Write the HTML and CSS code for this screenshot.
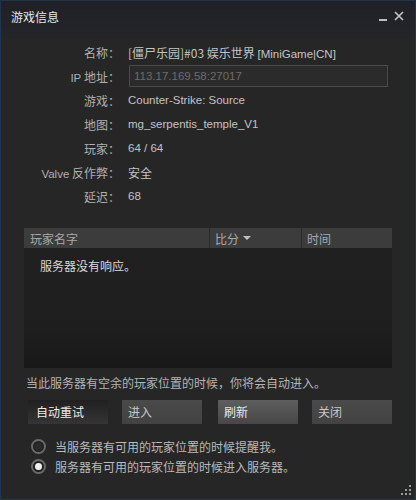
FILE: index.html
```html
<!DOCTYPE html>
<html>
<head>
<meta charset="utf-8">
<link rel="stylesheet" href="styles.css">
</head>
<body>
<div class="window">
  <div class="titlebar">
    <span class="title">游戏信息</span>
    <div class="controls">
      <span class="min"></span>
      <svg class="close" width="10" height="10" viewBox="0 0 10 10"><path d="M1 1L9 9M9 1L1 9" stroke="#c8c8c8" stroke-width="1.6"/></svg>
    </div>
  </div>
  <div class="info">
    <div class="lbl">名称：</div><div class="val">[僵尸乐园]#03 娱乐世界 <span class="lat">[MiniGame|CN]</span></div>
    <div class="lbl"><span class="lat">IP</span> 地址：</div><div class="val"><div class="ipbox">113.17.169.58:27017</div></div>
    <div class="lbl">游戏：</div><div class="val lat">Counter-Strike: Source</div>
    <div class="lbl">地图：</div><div class="val lat">mg_serpentis_temple_V1</div>
    <div class="lbl">玩家：</div><div class="val lat">64 / 64</div>
    <div class="lbl"><span class="lat">Valve</span> 反作弊：</div><div class="val">安全</div>
    <div class="lbl">延迟：</div><div class="val lat">68</div>
  </div>
  <div class="table">
    <div class="thead">
      <div class="th c1">玩家名字</div>
      <div class="th c2">比分 <span class="tri"></span></div>
      <div class="th c3">时间</div>
    </div>
    <div class="tbody">
      <div class="empty">服务器没有响应。</div>
    </div>
  </div>
  <div class="note">当此服务器有空余的玩家位置的时候，你将会自动进入。</div>
  <div class="buttons">
    <div class="btn dark">自动重试</div>
    <div class="btn">进入</div>
    <div class="btn hover">刷新</div>
    <div class="btn">关闭</div>
  </div>
  <div class="radios">
    <div class="radio"><span class="circle"></span>当服务器有可用的玩家位置的时候提醒我。</div>
    <div class="radio"><span class="circle on"></span>服务器有可用的玩家位置的时候进入服务器。</div>
  </div>
  <svg class="grip" width="10" height="10" viewBox="0 0 10 10">
    <rect x="8" y="0" width="2" height="2" fill="#9a9a9a"/>
    <rect x="4" y="4" width="2" height="2" fill="#9a9a9a"/>
    <rect x="8" y="4" width="2" height="2" fill="#9a9a9a"/>
    <rect x="0" y="8" width="2" height="2" fill="#9a9a9a"/>
    <rect x="4" y="8" width="2" height="2" fill="#9a9a9a"/>
    <rect x="8" y="8" width="2" height="2" fill="#9a9a9a"/>
  </svg>
</div>
</body>
</html>
```

FILE: styles.css
```css
* { box-sizing: border-box; }
html, body { margin: 0; padding: 0; background: #262626; }
body {
  font-family: "Noto Sans CJK SC", "Noto Sans", sans-serif;
  font-size: 12px;
  color: #b4b4b4;
}
.lat { font-family: "Liberation Sans", "Noto Sans CJK SC", sans-serif; font-size: 11.5px; }
.window {
  position: relative;
  width: 416px;
  height: 500px;
  border: 1px solid #1d3550;
  background: linear-gradient(#1f2127 0px, #22242a 28px, #262626 40px, #262626 100%);
  overflow: hidden;
}
.titlebar {
  height: 34px;
  display: flex;
  align-items: flex-start;
  justify-content: space-between;
  padding: 8px 11px 0 10px;
}
.title { color: #e6e6e6; font-size: 12px; line-height: 16px; }
.controls { display: flex; align-items: flex-end; gap: 7px; padding-top: 2px; }
.min { display: block; width: 8px; height: 2px; background: #bdbdbd; }
.close { display: block; }
.info {
  display: grid;
  grid-template-columns: 119px 1fr;
  grid-auto-rows: 24px;
  margin-top: 5px;
  align-items: center;
}
.lbl { text-align: right; color: #b0b0b0; white-space: nowrap; }
.val { padding-left: 8px; color: #c4c4c4; white-space: nowrap; }
.ipbox {
  width: 259px;
  height: 22px;
  margin-left: 1px;
  border: 1px solid #4a4a4a;
  background: #2b2b2b;
  color: #6c6c6c;
  font-family: "Liberation Sans", sans-serif;
  font-size: 11.5px;
  line-height: 20px;
  padding-left: 4px;
}
.table { margin: 20px 23px 0 23px; }
.thead {
  height: 20px;
  background: #3c3c3c;
  display: flex;
  align-items: center;
  color: #a8a8a8;
}
.th { height: 100%; display: flex; align-items: center; }
.c1 { width: 185px; padding-left: 6px; }
.c2 { width: 92px; border-left: 1px solid #2a2a2a; padding-left: 5px; }
.c3 { flex: 1; border-left: 1px solid #2a2a2a; padding-left: 5px; }
.tri {
  display: inline-block;
  width: 0; height: 0;
  border-left: 4px solid transparent;
  border-right: 4px solid transparent;
  border-top: 4px solid #c0c0c0;
  margin-left: 4px;
}
.tbody {
  height: 120px;
  background: linear-gradient(#202020, #1e1e1e 70%, #181818);
  padding: 9px 0 0 16px;
}
.empty { color: #d8d8d8; }
.note { margin: 7px 0 0 25px; color: #b4b4b4; line-height: 16px; }
.buttons {
  display: flex;
  gap: 14px;
  margin: 9px 0 0 27px;
}
.btn {
  width: 80px;
  height: 24px;
  line-height: 24px;
  padding-left: 6px;
  color: #c8c8c8;
  background: linear-gradient(#4a4a4a, #424242);
}
.btn.dark {
  background: linear-gradient(#202020, #353535);
  color: #eeeeee;
  padding-left: 8px;
}
.btn.hover {
  background: linear-gradient(#5e5e5e, #474747);
  color: #e8e8e8;
}
.btn:nth-child(3) { margin-left: 2px; }
.radios { margin: 14px 0 0 30px; display: flex; flex-direction: column; gap: 4px; }
.radio { display: flex; align-items: center; height: 16px; color: #bababa; }
.circle {
  width: 15px; height: 15px;
  border-radius: 50%;
  border: 2px solid #6a6a6a;
  background: #2a2a2a;
  margin-right: 9px;
  position: relative;
  box-shadow: inset 0 0 2px #000;
}
.circle.on::after {
  content: "";
  position: absolute;
  left: 2px; top: 2px;
  width: 7px; height: 7px;
  border-radius: 50%;
  background: #f0f0f0;
}
.grip { position: absolute; right: 4px; bottom: 4px; }
```
